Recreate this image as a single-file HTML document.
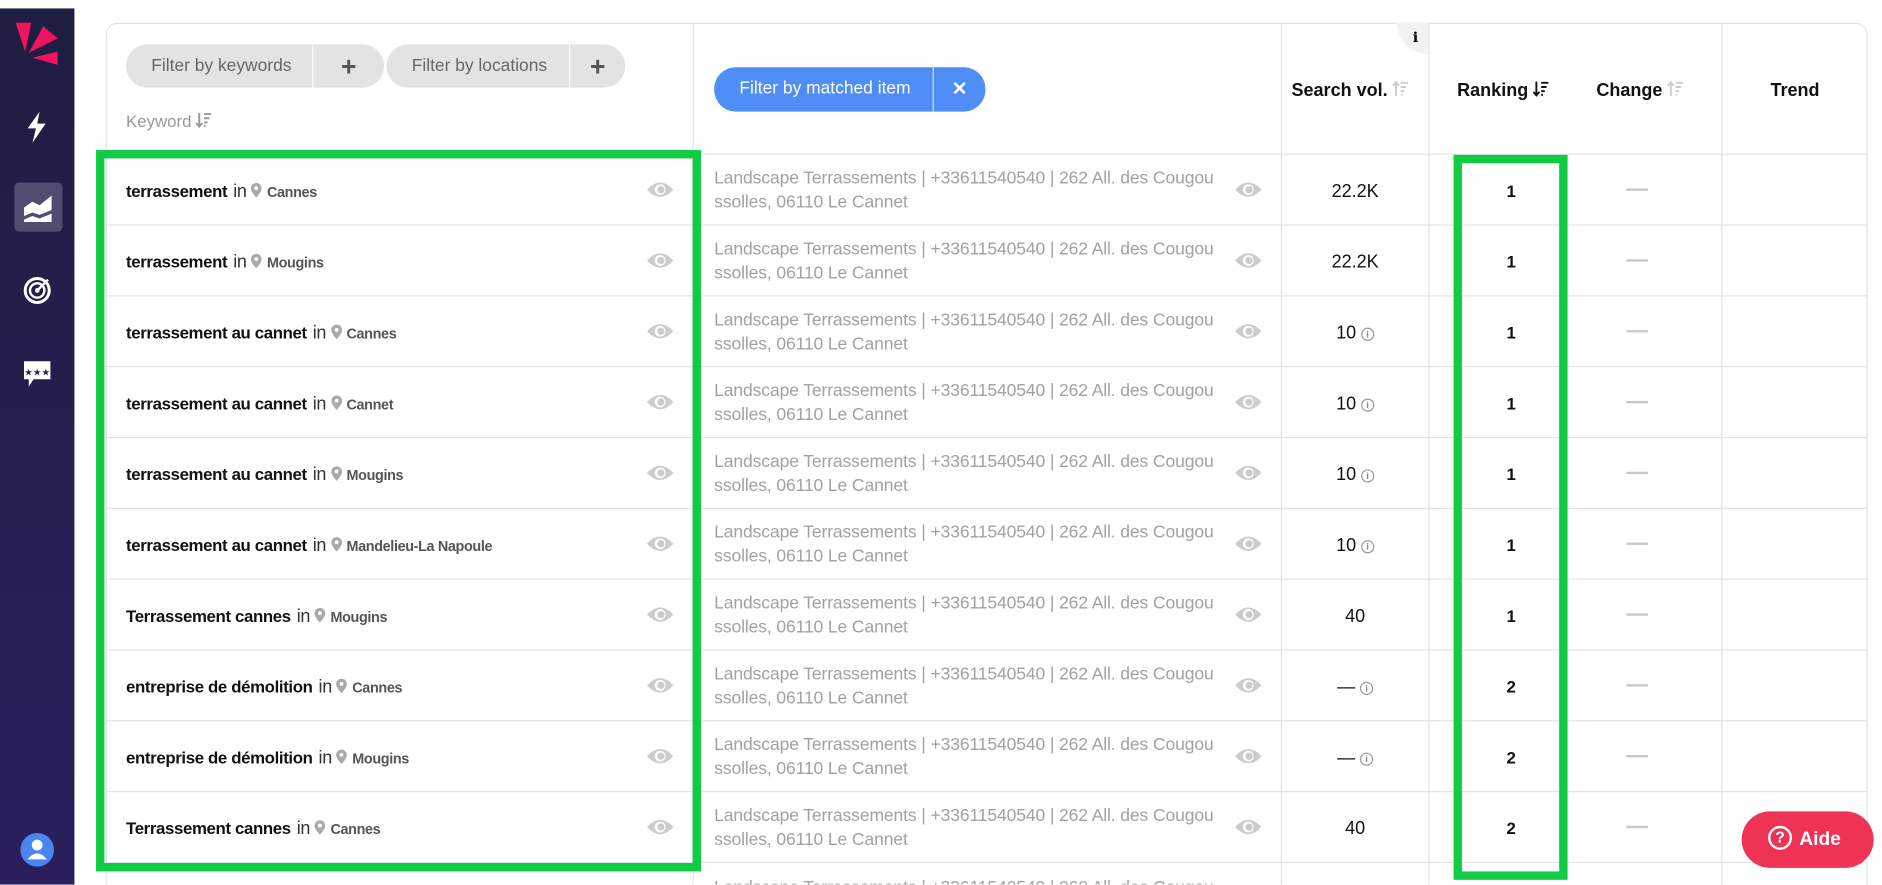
<!DOCTYPE html>
<html><head><meta charset="utf-8">
<style>
*{box-sizing:border-box;margin:0;padding:0}
html,body{width:1882px;height:885px;overflow:hidden;background:#fff;font-family:"Liberation Sans",Arial,sans-serif}
#w{position:absolute;left:0;top:0;width:1568px;height:737px;transform:scale(1.2003);transform-origin:0 0;overflow:hidden}
.abs{position:absolute}
#side{left:0;top:7px;width:62px;height:730px;background:linear-gradient(#201d42,#2a1f5c)}
#card{left:88px;top:19px;width:1468px;height:740px;border:1px solid #e3e3e3;border-radius:10px}
.vl{position:absolute;width:1px;background:#e3e3e3}
.hl{position:absolute;height:1px;background:#e3e3e3;left:88px;width:1468px}
.pill{position:absolute;height:36px;border-radius:18px;background:#e3e3e3;color:#666;font-size:14.5px;line-height:37px;display:flex;overflow:hidden}
.pill span{padding:0 0 0 21px}
.pill b{display:block;border-left:1.5px solid #fff;font-size:22px;color:#555;text-align:center;font-weight:bold}
.kw{position:absolute;left:105px;font-size:14px;font-weight:bold;color:#111;letter-spacing:-0.3px;white-space:nowrap}
.kw i{font-style:normal;font-weight:normal;color:#333;font-size:15px;margin:0 4px 0 5px}
.kw em{font-style:normal;font-size:12px;color:#555}
.pin{display:inline-block;width:9px;height:13px;vertical-align:-1px;margin-right:4px}
.eye{position:absolute;width:22px;height:14px}
.m{position:absolute;left:595px;font-size:14.6px;color:#a2a2a2;line-height:20px;letter-spacing:-0.1px;white-space:nowrap}
.sv{position:absolute;left:1068px;width:122px;text-align:center;font-size:15px;color:#111}
.rk{position:absolute;left:1213px;width:92px;text-align:center;font-size:14px;font-weight:bold;color:#111}
.ch{position:absolute;left:1355px;width:18px;height:2px;background:#c8c8c8}
.hd{position:absolute;top:67px;font-size:15px;font-weight:bold;color:#111;white-space:nowrap}
.hd .so{margin-left:4px}
.gb{position:absolute;border:7px solid #10cc44}
.ii{display:inline-block;width:11px;height:11px;border:1px solid #999;border-radius:50%;font-size:8px;line-height:9px;text-align:center;color:#888;vertical-align:1px;margin-left:4px;font-weight:bold}
.so{display:inline-block;width:14px;height:14px;vertical-align:-1px}
</style></head><body><div id="w">
<div id="side" class="abs">
<svg class="abs" style="left:0;top:-7px" width="62" height="70"><polygon points="13,19 26,19 21,43" fill="#f0135f"/><polygon points="36,22 48,32 24,44" fill="#f0135f"/><polygon points="27,48 48,43 48,54" fill="#f0135f"/></svg>
<svg class="abs" style="left:20px;top:85px" width="22" height="28"><polygon points="13,1 3,15 10,15 7,27 18,11 11,11" fill="#fff"/></svg>
<div class="abs" style="left:12px;top:145px;width:40px;height:41px;border-radius:4px;background:#514c72"></div>
<svg class="abs" style="left:19px;top:153px" width="26" height="26"><path d="M1,13 L8,8 L14,11 L24,3 L24,15 L14,19 L8,17 L1,20Z M1,23 L8,20 L14,22 L24,18 L24,25 L1,25Z" fill="#fff"/></svg>
<svg class="abs" style="left:19px;top:223px" width="24" height="24"><circle cx="12" cy="12" r="10" fill="none" stroke="#fff" stroke-width="2.5"/><circle cx="12" cy="12" r="6" fill="none" stroke="#fff" stroke-width="2"/><circle cx="12" cy="12" r="2" fill="#fff"/><path d="M12 12 L21 3" stroke="#fff" stroke-width="2"/></svg>
<svg class="abs" style="left:18px;top:292px" width="26" height="26"><path d="M2,2 H24 V17 H10 L6,23 V17 H2Z" fill="#fff"/><text x="13" y="14" font-size="8" fill="#2a2050" text-anchor="middle" font-family="DejaVu Sans">★★★</text></svg>
<svg class="abs" style="left:16px;top:686px" width="30" height="30"><circle cx="15" cy="15" r="14" fill="#4a86f0"/><circle cx="15" cy="11" r="4.5" fill="#fff"/><path d="M7,23 Q15,13 23,23Z" fill="#fff"/></svg>
</div>

<div id="card" class="abs"></div>
<div class="vl" style="left:577px;top:19px;height:718px"></div>
<div class="vl" style="left:1067px;top:19px;height:718px"></div>
<div class="vl" style="left:1190px;top:19px;height:718px"></div>
<div class="vl" style="left:1434px;top:19px;height:718px"></div>
<div class="abs" style="left:1164px;top:19px;width:26px;height:26px;background:#f2f2f2;border-bottom-left-radius:26px"></div>
<div class="abs" style="left:1177px;top:24px;font-size:12px;font-weight:bold;font-family:'DejaVu Serif',serif">i</div>

<div class="pill" style="left:105px;top:37px;width:215px"><span style="width:155px">Filter by keywords</span><b style="width:60px">+</b></div>
<div class="pill" style="left:322px;top:37px;width:199px"><span style="width:152px">Filter by locations</span><b style="width:47px">+</b></div>
<div class="abs" style="left:105px;top:93px;font-size:14px;color:#999">Keyword <svg class="so" viewBox="0 0 14 14"><path d="M3,1 V12 M0.5,9.5 L3,12.5 L5.5,9.5" stroke="#999" stroke-width="1.6" fill="none"/><path d="M7,2 H13 M7,5.5 H11.5 M7,9 H10 M7,12 H8.5" stroke="#999" stroke-width="1.6"/></svg></div>
<div class="pill" style="left:595px;top:56px;width:226px;height:37px;background:#4f8ef7;color:#fff"><span style="width:182px;line-height:37px">Filter by matched item</span><b style="width:44px;color:#fff;font-size:16px;line-height:37px;border-color:#cfe0ff">✕</b></div>

<div class="hd" style="left:1076px">Search vol.<svg class="so" viewBox="0 0 14 14"><path d="M3,13 V2 M0.5,4.5 L3,1.5 L5.5,4.5" stroke="#ccc" stroke-width="1.6" fill="none"/><path d="M7,2 H13 M7,5.5 H11.5 M7,9 H10 M7,12 H8.5" stroke="#ccc" stroke-width="1.6"/></svg></div>
<div class="hd" style="left:1214px">Ranking<svg class="so" viewBox="0 0 14 14"><path d="M3,1 V12 M0.5,9.5 L3,12.5 L5.5,9.5" stroke="#111" stroke-width="1.6" fill="none"/><path d="M7,2 H13 M7,5.5 H11.5 M7,9 H10 M7,12 H8.5" stroke="#111" stroke-width="1.6"/></svg></div>
<div class="hd" style="left:1330px">Change<svg class="so" viewBox="0 0 14 14"><path d="M3,13 V2 M0.5,4.5 L3,1.5 L5.5,4.5" stroke="#ccc" stroke-width="1.6" fill="none"/><path d="M7,2 H13 M7,5.5 H11.5 M7,9 H10 M7,12 H8.5" stroke="#ccc" stroke-width="1.6"/></svg></div>
<div class="hd" style="left:1475px">Trend</div>

<div id="rows"></div>

<div class="gb" style="left:80px;top:125px;width:504px;height:601px"></div>
<div class="gb" style="left:1211px;top:129px;width:95px;height:604px"></div>

<div class="abs" style="left:1451px;top:676px;width:110px;height:47px;border-radius:24px;background:#ef3354;color:#fff;font-weight:bold;font-size:16px;line-height:47px;padding-left:22px"><span style="display:inline-block;width:20px;height:20px;border:2px solid #fff;border-radius:50%;font-size:13px;line-height:16px;text-align:center;vertical-align:2px;margin-right:6px">?</span>Aide</div>
</div>
<script>
var d=[["terrassement","Cannes","22.2K",1],["terrassement","Mougins","22.2K",1],["terrassement au cannet","Cannes","10i",1],["terrassement au cannet","Cannet","10i",1],["terrassement au cannet","Mougins","10i",1],["terrassement au cannet","Mandelieu-La Napoule","10i",1],["Terrassement cannes","Mougins","40",1],["entreprise de démolition","Cannes","—i",2],["entreprise de démolition","Mougins","—i",2],["Terrassement cannes","Cannes","40",2]];
var pin='<svg class="pin" viewBox="0 0 9 12"><path d="M4.5,0 C2,0 0,2 0,4.5 C0,7.5 4.5,12 4.5,12 C4.5,12 9,7.5 9,4.5 C9,2 7,0 4.5,0Z" fill="#aaa"/><circle cx="4.5" cy="4.3" r="1.6" fill="#fff"/></svg>';
var eye=function(x,y){return '<svg class="eye" style="left:'+x+'px;top:'+y+'px" viewBox="0 0 22 14"><path d="M0,7 Q11,-5 22,7 Q11,19 0,7Z" fill="#ccc"/><circle cx="11" cy="7" r="4.5" fill="#fff"/><circle cx="11.6" cy="7" r="3" fill="#ccc"/></svg>'};
var h='';
for(var i=0;i<11;i++){var t=128+59*i;h+='<div class="hl" style="top:'+t+'px"></div>';
 if(i==10){h+='<div class="m" style="top:'+(t+12)+'px">Landscape Terrassements | +33611540540 | 262 All. des Cougou</div>';break;}
 var r=d[i],c=t+29;
 h+='<div class="kw" style="top:'+(c-6)+'px">'+r[0]+'<i>in</i>'+pin+'<em>'+r[1]+'</em></div>';
 h+=eye(539,c-6)+eye(1029,c-6);
 h+='<div class="m" style="top:'+(c-18)+'px">Landscape Terrassements | +33611540540 | 262 All. des Cougou<br>ssolles, 06110 Le Cannet</div>';
 var v=r[2],inf=v.slice(-1)=="i";if(inf)v=v.slice(0,-1);
 h+='<div class="sv" style="top:'+(c-6)+'px">'+v+(inf?'<span class="ii">i</span>':'')+'</div>';
 h+='<div class="rk" style="top:'+(c-6)+'px">'+r[3]+'</div>';
 h+='<div class="ch" style="top:'+c+'px"></div>';}
document.getElementById('rows').innerHTML=h;
</script>
</body></html>
